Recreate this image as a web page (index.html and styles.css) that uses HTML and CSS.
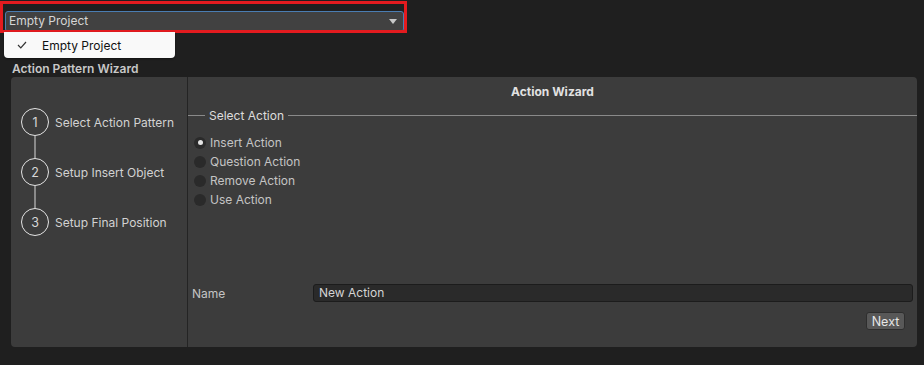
FILE: index.html
```html
<!DOCTYPE html>
<html lang="en">
<head>
  <meta charset="UTF-8"/>
  <title>Action Pattern Wizard</title>
  <link rel="stylesheet" href="styles.css">
</head>
<body>
  <!-- Project selector -->
  <div class="highlight">
    <div class="dropdown">
      <span>Empty Project</span>
      <span class="arrow"></span>
    </div>
  </div>
  <div class="menu">
    <svg class="check" width="10" height="8" viewBox="0 0 10 8"><polyline points="1,4 3.8,6.8 9,1" fill="none" stroke="#333" stroke-width="1.2"/></svg>
    <span>Empty Project</span>
  </div>

  <div class="title">Action Pattern Wizard</div>

  <div class="panel">
    <!-- Steps -->
    <div class="steps">
      <div class="step"><div class="circle">1</div><span>Select Action Pattern</span></div>
      <div class="connector"></div>
      <div class="step"><div class="circle">2</div><span>Setup Insert Object</span></div>
      <div class="connector"></div>
      <div class="step"><div class="circle">3</div><span>Setup Final Position</span></div>
    </div>

    <!-- Wizard page -->
    <div class="page">
      <div class="page-title">Action Wizard</div>
      <div class="legend">
        <div class="line short"></div>
        <span>Select Action</span>
        <div class="line"></div>
      </div>
      <div class="radios">
        <label class="radio checked"><span class="dot"></span>Insert Action</label>
        <label class="radio"><span class="dot"></span>Question Action</label>
        <label class="radio"><span class="dot"></span>Remove Action</label>
        <label class="radio"><span class="dot"></span>Use Action</label>
      </div>
      <div class="name-row">
        <span class="name-label">Name</span>
        <div class="text-field">New Action</div>
      </div>
      <div class="buttons">
        <button class="next">Next</button>
      </div>
    </div>
  </div>
</body>
</html>
```

FILE: styles.css
```css
:root {
  --bg:        #1f1f1f;
  --panel:     #3c3c3c;
  --divider:   #242424;
  --text:      #c4c4c4;
  --text-lite: #d2d2d2;
  --line:      #8a8a8a;
  --red:       #e31b1f;
}
* { box-sizing: border-box; margin: 0; padding: 0; }
body {
  background: var(--bg);
  color: var(--text);
  font-family: Inter, "Noto Sans", sans-serif;
  font-size: 12px;
  position: relative;
  height: 365px;
  overflow: hidden;
}

.highlight {
  margin-top: 1px;
  width: 407px;
  height: 32px;
  border: 3px solid var(--red);
  padding: 7px 0 0 2px;
  overflow: hidden;
}
.dropdown {
  width: 399px;
  height: 21px;
  background: #414141;
  border: 1px solid #4a7db2;
  border-radius: 3px;
  display: flex;
  align-items: center;
  justify-content: space-between;
  padding: 0 6px 2px 3px;
  color: #d6d6d6;
}
.arrow {
  width: 0;
  height: 0;
  border-left: 4px solid transparent;
  border-right: 4px solid transparent;
  border-top: 5px solid #c8c8c8;
  margin-top: 2px;
}

.menu {
  position: absolute;
  top: 32px;
  left: 4px;
  width: 171px;
  height: 26px;
  background: #f9f9f9;
  border-radius: 0 0 4px 4px;
  display: flex;
  align-items: center;
  color: #111;
  box-shadow: 0 1px 2px rgba(0,0,0,0.4);
}
.menu .check { margin: 0 15px 0 13px; }

.title {
  margin-top: 28px;
  padding-left: 12px;
  height: 16px;
  line-height: 16px;
  font-weight: 600;
  color: #c8c8c8;
}

.panel {
  margin: 0 7px 0 11px;
  height: 270px;
  background: var(--panel);
  border-radius: 4px;
  display: flex;
}

.steps {
  width: 177px;
  border-right: 1px solid var(--divider);
  padding: 31px 0 0 10px;
}
.step {
  display: flex;
  align-items: center;
  gap: 6px;
  color: var(--text-lite);
}
.circle {
  width: 28px;
  height: 28px;
  border: 1.5px solid #e4e4e4;
  border-radius: 50%;
  display: flex;
  align-items: center;
  justify-content: center;
  color: #d8d8d8;
  font-size: 12.5px;
}
.connector {
  width: 2px;
  height: 22px;
  margin-left: 13px;
  background: var(--line);
}

.page {
  flex: 1;
  display: flex;
  flex-direction: column;
}
.page-title {
  height: 30px;
  line-height: 30px;
  text-align: center;
  font-weight: 700;
  color: #e2e2e2;
}
.legend {
  height: 16px;
  display: flex;
  align-items: center;
  gap: 4px;
  color: #dcdcdc;
}
.legend .line {
  flex: 1;
  height: 1px;
  background: var(--line);
}
.legend .line.short { flex: 0 0 17px; }

.radios {
  margin-top: 10px;
  padding-left: 6px;
}
.radio {
  height: 19px;
  display: flex;
  align-items: center;
  gap: 4px;
}
.dot {
  width: 12px;
  height: 12px;
  border-radius: 50%;
  background: #2a2a2a;
  display: flex;
  align-items: center;
  justify-content: center;
}
.radio.checked .dot::after {
  content: "";
  width: 5px;
  height: 5px;
  border-radius: 50%;
  background: #e4e4e4;
}

.name-row {
  margin-top: auto;
  display: flex;
  align-items: center;
  padding: 0 4px 0 4px;
}
.name-label { width: 121px; }
.text-field {
  flex: 1;
  height: 18px;
  line-height: 16px;
  background: #2a2a2a;
  border: 1px solid #1c1c1c;
  border-radius: 3px;
  padding-left: 5px;
  color: #d4d4d4;
}
.buttons {
  display: flex;
  justify-content: flex-end;
  padding: 10px 12px 17px 0;
}
.next {
  width: 39px;
  height: 18px;
  background: #585858;
  border: 1px solid #2e2e2e;
  border-radius: 3px;
  color: #e6e6e6;
  font-family: inherit;
  font-size: 12.5px;
}
```
